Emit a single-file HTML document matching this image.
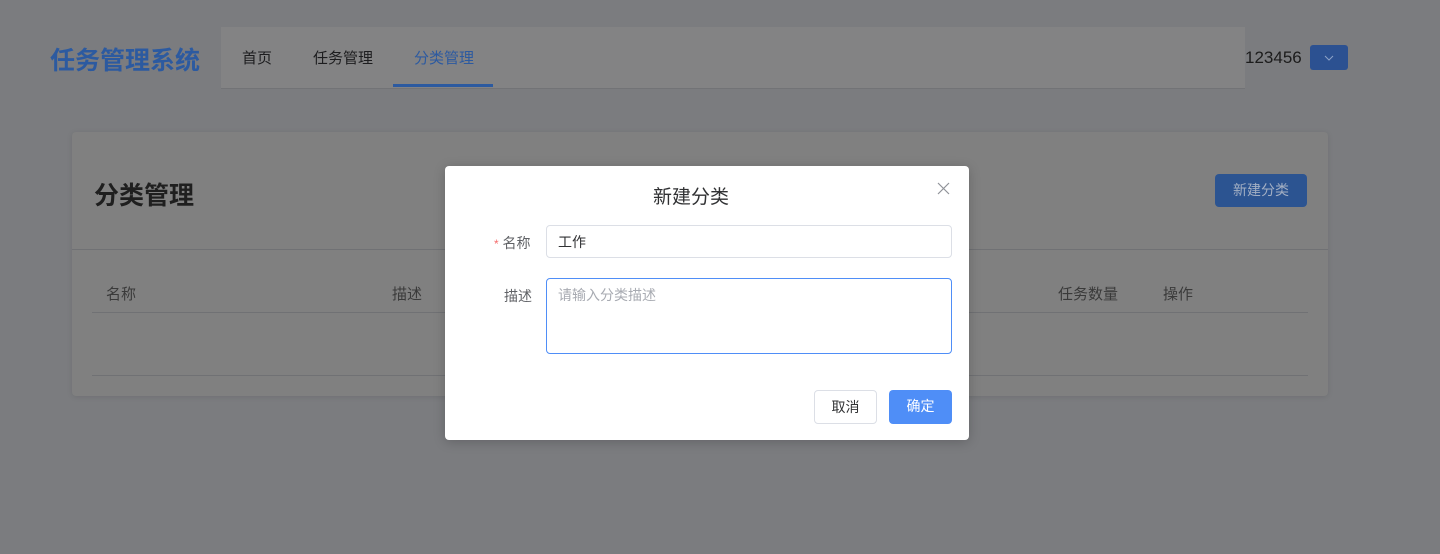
<!DOCTYPE html>
<html><head><meta charset="utf-8"><style>
*{box-sizing:border-box;margin:0;padding:0}
body{width:1440px;height:554px;background:#7b7c7f;font-family:"Liberation Sans","Noto Sans CJK SC",sans-serif;position:relative;overflow:hidden;color:#303133}
.abs{position:absolute}
.logo{left:50px;top:41px;font-size:25px;font-weight:bold;color:#2c5aa0}
.nav{left:221px;top:27px;width:1024px;height:62px;background:#838384;border-bottom:1px solid #727376}
.nav span{position:absolute;top:20px;font-size:15px;color:#1d1d1f}
.ul{left:393px;top:84px;width:100px;height:3px;background:#2c5aa0}
.user{left:1245px;top:48px;font-size:17px;color:#1c1c1c}
.dd{left:1310px;top:45px;width:38px;height:25px;background:#2c5191;border-radius:3px}
.card{left:72px;top:132px;width:1256px;height:264px;background:#808080;border-radius:4px;box-shadow:0 1px 6px rgba(0,0,0,.1)}
.ttl{left:94px;top:176px;font-size:25px;font-weight:bold;color:#1f1f1f}
.nb{left:1215px;top:174px;width:92px;height:33px;background:#2c5491;border-radius:4px;color:#a3afc3;font-size:14px;text-align:center;line-height:33px}
.hl{height:1px;background:#707174}
.th{top:283px;font-size:15px;color:#3a3a3a}
.modal{left:445px;top:166px;width:524px;height:274px;background:#fff;border-radius:4px;box-shadow:0 2px 12px rgba(0,0,0,.2)}
.mt{left:653px;top:182px;font-size:19px;color:#303133}
.lbl{font-size:14px;color:#606266}
.inp{left:546px;top:225px;width:406px;height:33px;border:1px solid #dcdfe6;border-radius:4px;font-size:14px;padding:6px 11px;color:#303133}
.ta{left:546px;top:278px;width:406px;height:76px;border:1px solid #4f8ef7;border-radius:4px;font-size:14px;padding:6px 11px;color:#a8abb2}
.btn{height:34px;border-radius:4px;font-size:14px;text-align:center;line-height:32px}
</style></head><body>
<div class="abs logo">任务管理系统</div>
<div class="abs nav"><span style="left:21px">首页</span><span style="left:92px">任务管理</span><span style="left:193px;color:#2c5aa0">分类管理</span></div>
<div class="abs ul"></div>
<div class="abs user">123456</div>
<div class="abs dd"><svg width="38" height="25"><path d="M15 11l4 4 4-4" stroke="#8ea3c7" fill="none" stroke-width="1"/></svg></div>
<div class="abs card"></div>
<div class="abs ttl">分类管理</div>
<div class="abs nb">新建分类</div>
<div class="abs hl" style="left:72px;top:249px;width:1256px"></div>
<div class="abs th" style="left:106px">名称</div>
<div class="abs th" style="left:392px">描述</div>
<div class="abs th" style="left:1058px">任务数量</div>
<div class="abs th" style="left:1163px">操作</div>
<div class="abs hl" style="left:92px;top:312px;width:1216px"></div>
<div class="abs hl" style="left:92px;top:375px;width:1216px"></div>
<div class="abs modal"></div>
<div class="abs mt">新建分类</div>
<svg class="abs" style="left:937px;top:182px" width="13" height="13"><path d="M1 1l11 11M12 1L1 12" stroke="#909399" stroke-width="1.2"/></svg>
<div class="abs lbl" style="left:494px;top:233px"><span style="color:#f56c6c;font-size:12px">*</span> 名称</div>
<div class="abs inp">工作</div>
<div class="abs lbl" style="left:504px;top:286px">描述</div>
<div class="abs ta">请输入分类描述</div>
<div class="abs btn" style="left:814px;top:390px;width:63px;border:1px solid #dcdfe6;color:#303133">取消</div>
<div class="abs btn" style="left:889px;top:390px;width:63px;background:#4f8ef7;color:#fff">确定</div>
</body></html>
